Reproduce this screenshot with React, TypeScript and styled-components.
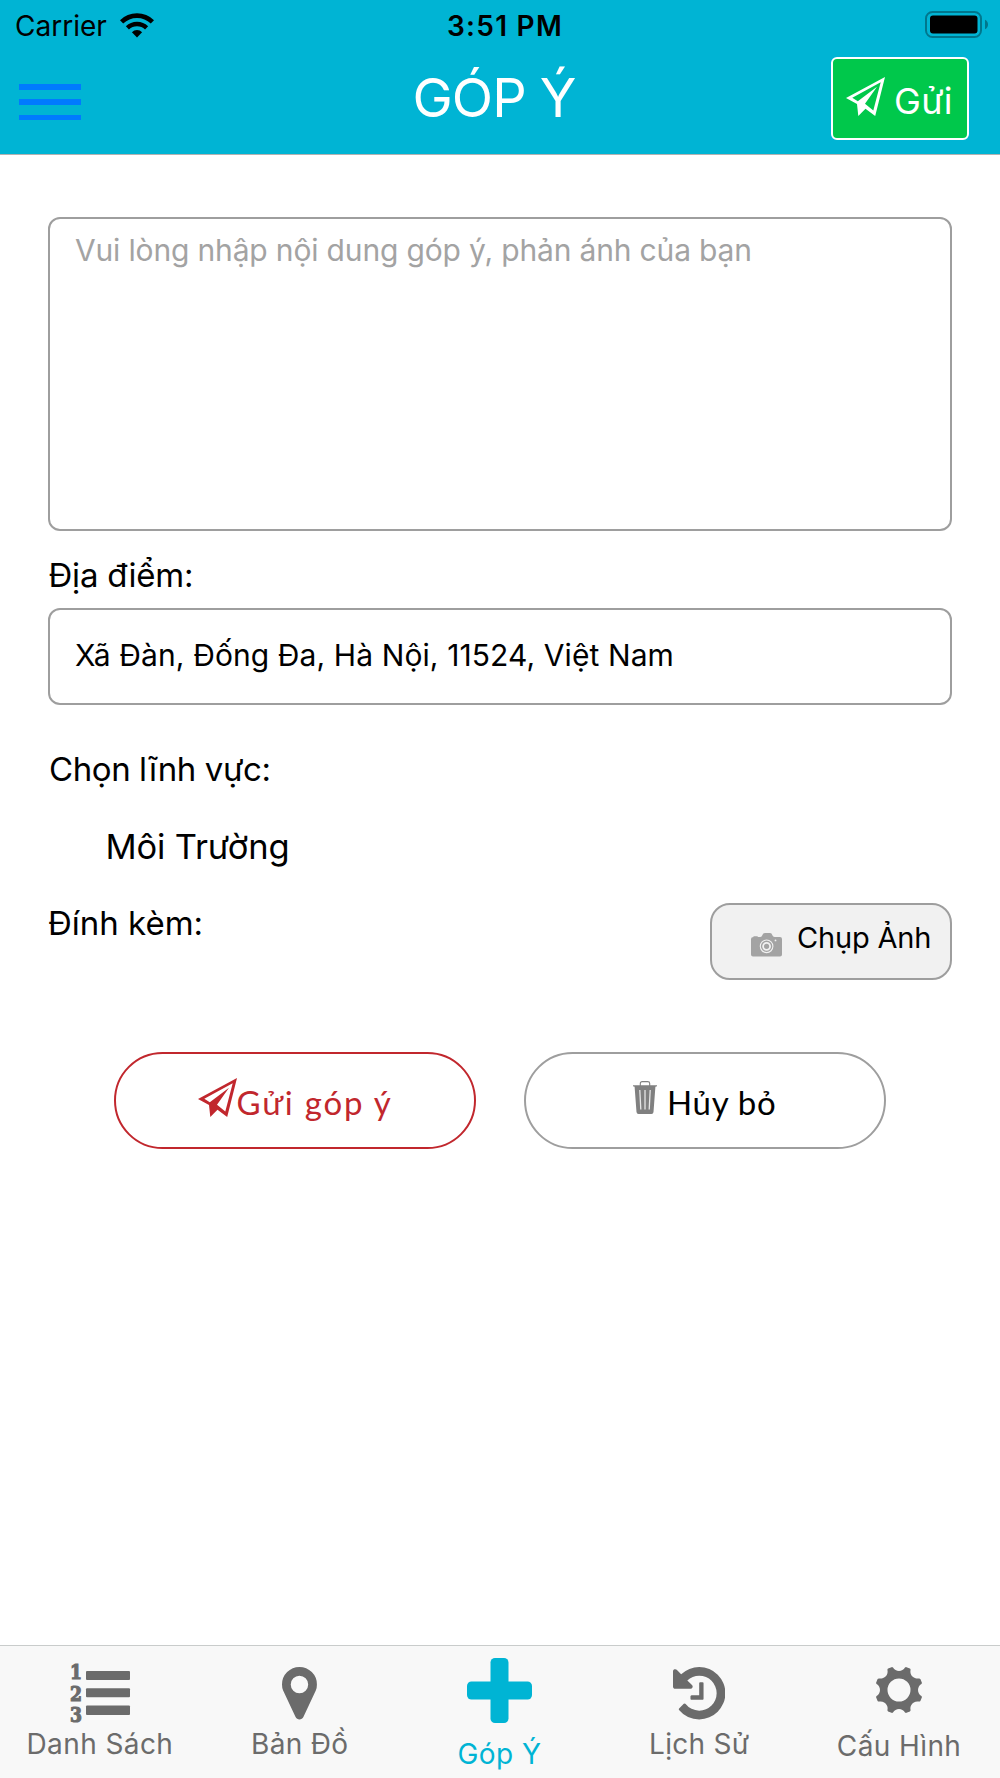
import React from "react";
import styled, { createGlobalStyle } from "styled-components";

const GlobalStyle = createGlobalStyle`
  * { box-sizing: border-box; }
  body { margin: 0; background: #fff; }
`;

const Screen = styled.div`
  width: 1000px;
  height: 1778px;
  display: flex;
  flex-direction: column;
  background: #fff;
  color: #000;
  font-family: Inter, "Noto Sans", sans-serif;
`;

const Header = styled.header`
  height: 155px;
  background: #00b4d4;
  border-bottom: 1px solid #b2b2b2;
`;

const StatusBar = styled.div`
  height: 51px;
  display: grid;
  grid-template-columns: 1fr auto 1fr;
  align-items: center;
  padding: 0 12px 0 15px;
`;

const Carrier = styled.div`
  display: flex;
  align-items: center;
  gap: 13px;
`;

const Text = styled.span<{ $size: number; $track?: number; $weight?: number; $font?: string }>`
  font-size: ${(p) => p.$size}px;
  line-height: 40px;
  letter-spacing: ${(p) => p.$track ?? 0}px;
  font-weight: ${(p) => p.$weight ?? 400};
  font-family: ${(p) => p.$font ?? "inherit"};
  white-space: nowrap;
`;

const Clock = styled.div`
  padding-left: 7px;
`;

const BatterySlot = styled.div`
  display: flex;
  justify-content: flex-end;
  padding-bottom: 3px;
`;

const NavBar = styled.div`
  height: 95px;
  display: grid;
  grid-template-columns: 1fr auto 1fr;
  align-items: center;
  padding: 0 31px 0 19px;
`;

const MenuButton = styled.button`
  width: 62px;
  height: 36px;
  margin: 7px 0 0;
  padding: 0;
  border: 0;
  background: none;
  display: flex;
  flex-direction: column;
  justify-content: space-between;
`;

const MenuLine = styled.span`
  height: 5.5px;
  background: #007aff;
`;

const Title = styled.h1`
  margin: 0;
  padding-bottom: 1px;
  font-size: 54px;
  line-height: 66px;
  font-weight: 400;
  letter-spacing: -1px;
  color: #fff;
`;

const SendButton = styled.button`
  justify-self: end;
  width: 138px;
  height: 83px;
  padding: 0 0 0 13px;
  display: flex;
  align-items: center;
  gap: 9px;
  border: 2.4px solid #fff;
  border-radius: 6px;
  background: #00c84b;
  color: #fff;
  font-family: inherit;
`;

const SendIcon = styled.span`
  display: flex;
  padding-bottom: 4px;
`;

const SendText = styled.div`
  padding-top: 5px;
`;

const Form = styled.main`
  flex: 1;
  padding: 62px 48px 0;
  display: flex;
  flex-direction: column;
`;

const Message = styled.div`
  height: 314px;
  padding: 11px 25px;
  border: 2px solid #9e9e9e;
  border-radius: 12px;
  color: #a3a3a3;
`;

const Label = styled.div<{ $top?: number; $indent?: number }>`
  display: flex;
  height: 40px;
  margin-top: ${(p) => p.$top ?? 0}px;
  padding-left: ${(p) => p.$indent ?? 0}px;
`;

const Address = styled.div`
  height: 97px;
  margin-top: 13px;
  padding: 0 25px 3px;
  display: flex;
  align-items: center;
  border: 2px solid #9e9e9e;
  border-radius: 12px;
`;

const AttachRow = styled.div`
  display: flex;
  justify-content: space-between;
  margin-top: 36px;
`;

const PhotoButton = styled.button`
  width: 242px;
  height: 77px;
  padding: 0 0 8px 39px;
  display: flex;
  align-items: center;
  gap: 15px;
  border: 2.4px solid #9e9e9e;
  border-radius: 20px;
  background: #f1f1f1;
  font-family: inherit;
  color: #000;
`;

const CameraSlot = styled.span`
  display: flex;
  padding-top: 15px;
`;

const Actions = styled.div`
  display: flex;
  gap: 48px;
  margin-top: 72px;
  padding-left: 66px;
`;

const Pill = styled.button<{ $line: string; $color: string; $gap: number; $left: number }>`
  width: 362px;
  height: 97px;
  padding: 2px 0 0 ${(p) => p.$left}px;
  display: flex;
  align-items: center;
  gap: ${(p) => p.$gap}px;
  border: 2.4px solid ${(p) => p.$line};
  border-radius: 49px;
  background: #fff;
  color: ${(p) => p.$color};
  font-family: inherit;
`;

const PillIcon = styled.span<{ $bottom: number }>`
  display: flex;
  padding-bottom: ${(p) => p.$bottom}px;
`;

const TabBar = styled.nav`
  height: 133px;
  display: flex;
  padding-right: 1px;
  border-top: 1px solid #c9cccb;
  background: #f8f8f8;
`;

const Tab = styled.a<{ $active?: boolean; $drop?: number }>`
  flex: 1;
  display: flex;
  flex-direction: column;
  align-items: center;
  gap: ${(p) => p.$drop ?? 0}px;
  padding-top: 12px;
  color: ${(p) => (p.$active ? "#00b4d4" : "#6b6b6b")};
`;

const TabIcon = styled.span`
  height: 66px;
  display: flex;
`;

const Plane = ({ size }: { size: number }) => (
  <svg width={size} height={size} viewBox="0 0 39 39" fill="currentColor">
    <path
      fillRule="evenodd"
      d="M39 0 29.200 39 19.500 31.800 12.300 39 11 27 0 21ZM34.700 5.200 6.300 20.800 11.800 24.200 31 9.700 19 26.800 27.300 33.400Z"
    />
  </svg>
);

const Wifi = () => (
  <svg width="34" height="25" viewBox="0 0 34 25" fill="none" stroke="#000">
    <path d="M1.6 8.9a22 22 0 0 1 30.8 0" strokeWidth="4.6" />
    <path d="M7.4 14.9a13.7 13.7 0 0 1 19.2 0" strokeWidth="4.4" />
    <path d="M11.9 19.2a7.3 7.3 0 0 1 10.2 0L17 24.4Z" fill="#000" stroke="none" />
  </svg>
);

const Battery = () => (
  <svg width="63" height="27" viewBox="0 0 63 27">
    <rect x="1" y="1" width="55" height="25" rx="6.5" fill="none" stroke="#00778d" strokeWidth="2" />
    <rect x="5" y="4.5" width="47.5" height="18" rx="3" fill="#000" />
    <path d="M60 8.8q3 1.4 3 4.7t-3 4.7z" fill="#00778d" />
  </svg>
);

const Camera = () => (
  <svg width="31" height="24" viewBox="0 0 31 24">
    <path
      fill="#a3a3a3"
      d="M2.5 4V3.2h4.2V4h2.6q1.6 0 2-1.700Q12 0 14 0h5q1.800 0 2.400 2.200.4 1.800 2.300 1.800H29q2 0 2 2v15.500q0 2-2 2H2q-2 0-2-2V6q0-2 2.500-2Z"
    />
    <circle cx="15.600" cy="13.300" r="6.300" fill="none" stroke="#f1f1f1" strokeWidth="1.100" />
    <circle cx="15.600" cy="13.300" r="3.500" fill="none" stroke="#f1f1f1" strokeWidth="1.800" />
    <circle cx="24.500" cy="7.400" r="0.900" fill="#f1f1f1" />
  </svg>
);

const Trash = () => (
  <svg width="24" height="33" viewBox="0 0 24 33" fill="#808080">
    <path d="M7.300 5V2.500Q7.300.6 9.200.6h5.600q1.900 0 1.900 1.900V5" fill="none" stroke="#808080" strokeWidth="1.100" />
    <path d="M0 4.200h24v1.100l-1.600.5L20.500 31q-.2 2-2 2H5.500q-1.800 0-2-2L1.600 5.800 0 5.300Z" />
    <path d="M6.800 9l1 19.500M12 9v19.500M17.200 9l-1 19.500" stroke="#e6e6e6" strokeWidth="1.300" />
  </svg>
);

const ListSvg = styled.svg`
  overflow: visible;
`;

const NumberedList = () => (
  <ListSvg width="62" height="72" viewBox="0 0 62 72" fill="currentColor">
    <g
      fontFamily='"DejaVu Serif", serif'
      fontWeight="700"
      fontSize="21"
      stroke="currentColor"
      strokeWidth="1.200"
    >
      <text x="1" y="21" textLength="12" lengthAdjust="spacingAndGlyphs">1</text>
      <text x="1" y="42.500" textLength="12" lengthAdjust="spacingAndGlyphs">2</text>
      <text x="1" y="64" textLength="12" lengthAdjust="spacingAndGlyphs">3</text>
    </g>
    <rect x="17" y="13" width="44" height="9" rx="1" />
    <rect x="17" y="30.300" width="44" height="9" rx="1" />
    <rect x="17" y="47.500" width="44" height="9.500" rx="1" />
  </ListSvg>
);

const Pin = () => (
  <svg width="35" height="66" viewBox="0 0 35 66" fill="currentColor">
    <path
      transform="translate(0 9) scale(.0341)"
      d="M768 512q0-106-75-181t-181-75-181 75-75 181 75 181 181 75 181-75 75-181zM1024 512q0 109-33 179l-364 774q-16 33-47.500 52t-67.500 19-67.500-19-46.500-52l-365-774q-33-70-33-179 0-212 150-362t362-150 362 150 150 362z"
    />
  </svg>
);

const Plus = () => (
  <svg width="65" height="66" viewBox="0 0 65 66" fill="currentColor">
    <rect x="23.500" y="0" width="18" height="65" rx="4.500" />
    <rect x="0" y="23.500" width="65" height="18" rx="4.500" />
  </svg>
);

const History = () => (
  <svg width="52" height="66" viewBox="0 0 52 66" fill="currentColor">
    <path
      transform="translate(0 9) scale(.0341)"
      d="M1536 768q0 156-61 298t-164 245-245 164-298 61q-172 0-327-72.500t-264-204.500q-7-10-6.500-22.500t8.500-20.500l137-138q10-9 25-9 16 2 23 12 73 95 179 147t225 52q104 0 198.500-40.500t163.500-109.500 109.500-163.500 40.500-198.500-40.500-198.500-109.500-163.500-163.500-109.500-198.500-40.500q-98 0-188 35.500t-160 101.500l137 138q31 30 14 69-17 40-59 40h-448q-26 0-45-19t-19-45v-448q0-42 40-59 39-17 69 14l130 129q107-101 244.500-156.500t284.500-55.500q156 0 298 61t245 164 164 245 61 298zM896 480v448q0 14-9 23t-23 9h-320q-14 0-23-9t-9-23v-64q0-14 9-23t23-9h224v-352q0-14 9-23t23-9h64q14 0 23 9t9 23z"
    />
  </svg>
);

// Eight teeth separated by round notches, with a round hole in the middle.
const gearPath = (() => {
  const point = (deg: number, r: number) => {
    const a = (deg * Math.PI) / 180;
    return `${(23 + r * Math.cos(a)).toFixed(2)} ${(32 + r * Math.sin(a)).toFixed(2)}`;
  };
  let d = "";
  for (let i = 0; i < 8; i++) {
    const mid = i * 45 + 22.5;
    d += `${i === 0 ? "M" : "A7 7 0 0 0 "}${point(mid - 7.5, 23.2)}`;
    d += `A1.5 1.5 0 0 1 ${point(mid - 4.5, 24)}L${point(mid + 4.5, 24)}A1.5 1.5 0 0 1 ${point(mid + 7.5, 23.2)}`;
  }
  d += `A7 7 0 0 0 ${point(15, 23.2)}Z`;
  return `${d}M34.500 32a11.500 11.500 0 1 0-23 0a11.500 11.500 0 1 0 23 0Z`;
})();

const Gear = () => (
  <svg width="46" height="66" viewBox="0 0 46 66" fill="currentColor">
    <path fillRule="evenodd" d={gearPath} />
  </svg>
);

const TABS = [
  { label: "Danh Sách", icon: <NumberedList />, track: 0.4 },
  { label: "Bản Đồ", icon: <Pin />, track: 0.3 },
  { label: "Góp Ý", icon: <Plus />, track: 0.5, active: true, drop: 10 },
  { label: "Lịch Sử", icon: <History />, track: 0.3 },
  { label: "Cấu Hình", icon: <Gear />, track: 0.4, drop: 2 },
];

const LATO = 'Lato, "Noto Sans", sans-serif';

export default function App() {
  return (
    <Screen>
      <GlobalStyle />
      <Header>
        <StatusBar>
          <Carrier>
            <Text $size={28}>Carrier</Text>
            <Wifi />
          </Carrier>
          <Clock>
            <Text $size={28} $weight={580} $track={1.3}>3:51 PM</Text>
          </Clock>
          <BatterySlot>
            <Battery />
          </BatterySlot>
        </StatusBar>
        <NavBar>
          <MenuButton aria-label="Menu">
            <MenuLine />
            <MenuLine />
            <MenuLine />
          </MenuButton>
          <Title>GÓP Ý</Title>
          <SendButton>
            <SendIcon>
              <Plane size={39} />
            </SendIcon>
            <SendText>
              <Text $size={36} $track={0.3}>Gửi</Text>
            </SendText>
          </SendButton>
        </NavBar>
      </Header>
      <Form>
        <Message>
          <Text $size={30} $track={-0.16}>Vui lòng nhập nội dung góp ý, phản ánh của bạn</Text>
        </Message>
        <Label $top={24} $indent={0.5}>
          <Text $size={33} $track={-0.2}>Địa điểm:</Text>
        </Label>
        <Address>
          <Text $size={30} $track={0.1}>Xã Đàn, Đống Đa, Hà Nội, 11524, Việt Nam</Text>
        </Address>
        <Label $top={44} $indent={1}>
          <Text $size={33} $track={-0.42}>Chọn lĩnh vực:</Text>
        </Label>
        <Label $top={38} $indent={57.500}>
          <Text $size={34.500} $track={-0.15}>Môi Trường</Text>
        </Label>
        <AttachRow>
          <Label>
            <Text $size={33}>Đính kèm:</Text>
          </Label>
          <PhotoButton>
            <CameraSlot>
              <Camera />
            </CameraSlot>
            <Text $size={29} $track={-0.2}>Chụp Ảnh</Text>
          </PhotoButton>
        </AttachRow>
        <Actions>
          <Pill $line="#c1272d" $color="#c1272d" $gap={0} $left={81.500}>
            <PillIcon $bottom={9}>
              <Plane size={39} />
            </PillIcon>
            <Text $size={33} $font={LATO} $track={1.8}>Gửi góp ý</Text>
          </Pill>
          <Pill $line="#9e9e9e" $color="#000" $gap={10} $left={107}>
            <PillIcon $bottom={8}>
              <Trash />
            </PillIcon>
            <Text $size={33} $font={LATO} $track={0.7}>Hủy bỏ</Text>
          </Pill>
        </Actions>
      </Form>
      <TabBar>
        {TABS.map((t) => (
          <Tab key={t.label} $active={t.active} $drop={t.drop}>
            <TabIcon>{t.icon}</TabIcon>
            <Text $size={28} $track={t.track}>{t.label}</Text>
          </Tab>
        ))}
      </TabBar>
    </Screen>
  );
}
